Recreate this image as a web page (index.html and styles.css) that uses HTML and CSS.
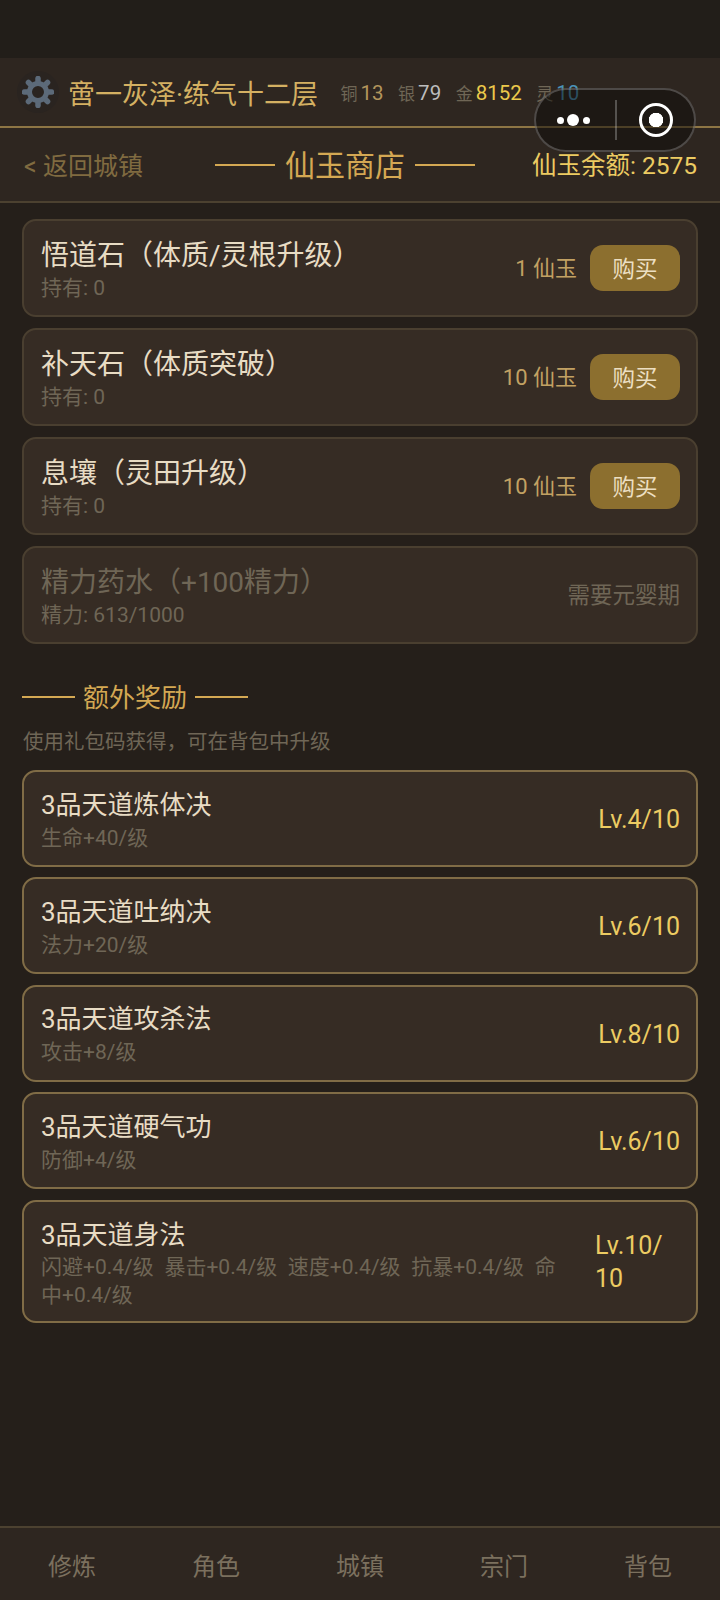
FILE: index.html
```html
<!DOCTYPE html>
<html lang="zh-CN">
<head>
<meta charset="utf-8">
<title>仙玉商店</title>
<link rel="stylesheet" href="styles.css">
</head>
<body>
<div class="page">
  <div class="statusbar"></div>
  <header class="topbar">
    <div class="avatar">
      <svg viewBox="0 0 32 32" width="32" height="32">
        <g class="gear-teeth">
          <path d="M16 2.500V29.500"/>
          <path d="M2.500 16H29.500"/>
          <path d="M6.450 6.450L25.550 25.550"/>
          <path d="M25.550 6.450L6.450 25.550"/>
        </g>
        <circle class="gear-body" cx="16" cy="16" r="8.500"/>
      </svg>
    </div>
    <div class="player">啻一灰泽·练气十二层</div>
    <div class="res"><span class="res-label">铜</span><span class="res-val copper">13</span></div>
    <div class="res"><span class="res-label">银</span><span class="res-val silver">79</span></div>
    <div class="res"><span class="res-label">金</span><span class="res-val gold">8152</span></div>
    <div class="res"><span class="res-label">灵</span><span class="res-val spirit">10</span></div>
  </header>
  <nav class="subbar">
    <div class="back">&lt; 返回城镇</div>
    <div class="shop-title"><span class="dash dash-lg"></span><span class="raised">仙玉商店</span><span class="dash dash-lg"></span></div>
    <div class="balance">仙玉余额: 2575</div>
  </nav>
  <main class="content">
    <section class="list shop">
      <div class="card">
        <div class="info"><div class="name">悟道石（体质/灵根升级）</div><div class="meta">持有: 0</div></div>
        <div class="price">1 仙玉</div><div class="buy">购买</div>
      </div>
      <div class="card">
        <div class="info"><div class="name">补天石（体质突破）</div><div class="meta">持有: 0</div></div>
        <div class="price">10 仙玉</div><div class="buy">购买</div>
      </div>
      <div class="card">
        <div class="info"><div class="name">息壤（灵田升级）</div><div class="meta">持有: 0</div></div>
        <div class="price">10 仙玉</div><div class="buy">购买</div>
      </div>
      <div class="card disabled">
        <div class="info"><div class="name">精力药水（+100精力）</div><div class="meta">精力: 613/1000</div></div>
        <div class="locked">需要元婴期</div>
      </div>
    </section>
    <div class="section-title"><span class="dash"></span><span class="raised">额外奖励</span><span class="dash"></span></div>
    <div class="section-sub">使用礼包码获得，可在背包中升级</div>
    <section class="list bonus">
      <div class="card gold-edge">
        <div class="info"><div class="name">3品天道炼体决</div><div class="meta">生命+40/级</div></div>
        <div class="lv">Lv.4/10</div>
      </div>
      <div class="card gold-edge">
        <div class="info"><div class="name">3品天道吐纳决</div><div class="meta">法力+20/级</div></div>
        <div class="lv">Lv.6/10</div>
      </div>
      <div class="card gold-edge">
        <div class="info"><div class="name">3品天道攻杀法</div><div class="meta">攻击+8/级</div></div>
        <div class="lv">Lv.8/10</div>
      </div>
      <div class="card gold-edge">
        <div class="info"><div class="name">3品天道硬气功</div><div class="meta">防御+4/级</div></div>
        <div class="lv">Lv.6/10</div>
      </div>
      <div class="card gold-edge tall">
        <div class="info wrap"><div class="name">3品天道身法</div><div class="meta stats">闪避+0.4/级&ensp;暴击+0.4/级&ensp;速度+0.4/级&ensp;抗暴+0.4/级&ensp;命中+0.4/级</div></div>
        <div class="lv lv-wrap">Lv.10/<br>10</div>
      </div>
    </section>
  </main>
  <footer class="tabbar">
    <div class="tab">修炼</div>
    <div class="tab">角色</div>
    <div class="tab">城镇</div>
    <div class="tab">宗门</div>
    <div class="tab">背包</div>
  </footer>
  <div class="capsule">
    <div class="cap-side cap-left dots"><i></i><i class="big"></i><i></i></div>
    <div class="cap-sep"></div>
    <div class="cap-side"><div class="target"></div></div>
  </div>
</div>
</body>
</html>
```
FILE: styles.css
```css
* { box-sizing: border-box; }
html, body { margin: 0; padding: 0; }
body {
  background: #231e19;
  font-family: "Roboto", "Noto Sans CJK SC", sans-serif;
  font-weight: 400;
}
.page {
  position: relative;
  width: 720px;
  height: 1600px;
  overflow: hidden;
  display: flex;
  flex-direction: column;
  background: #251f1a;
}
.statusbar { height: 58px; background: #221e19; flex: none; }

.topbar {
  flex: none;
  height: 70px;
  display: flex;
  align-items: center;
  padding: 0 0 0 17px;
  background: #2e2620;
  border-bottom: 2px solid #8d7544;
}
.avatar {
  width: 42px;
  height: 42px;
  border-radius: 50%;
  background: #2a2420;
  display: flex;
  align-items: center;
  justify-content: center;
  margin-right: 9px;
  flex: none;
}
.gear-teeth path { stroke: #5c6a79; stroke-width: 5.500; stroke-linecap: round; fill: none; }
.gear-body { fill: #2a2420; stroke: #5c6a79; stroke-width: 5; }
.player { font-size: 27px; color: #d4b062; margin-right: 22.500px; white-space: nowrap; }
.res { display: flex; align-items: baseline; margin-right: 14.500px; white-space: nowrap; }
.res-label { font-size: 17px; color: #6f6656; margin-right: 3px; }
.res-val { font-size: 20.500px; }
.copper { color: #b3955c; }
.silver { color: #bdbdbd; }
.gold { color: #ecc94b; }
.spirit { color: #4b93b8; }

.subbar {
  flex: none;
  height: 75px;
  display: grid;
  grid-template-columns: 191px auto 1fr;
  align-items: center;
  padding: 0 23px 0 24px;
  background: #2e2620;
  border-bottom: 2px solid #4c4130;
}
.back { font-size: 25px; color: #806b40; white-space: nowrap; padding-bottom: 2px; }
.shop-title { display: flex; align-items: center; gap: 10px; font-size: 30px; color: #d4a853; }
.raised { padding-bottom: 4px; }
.balance { font-size: 24.500px; color: #eccb62; text-align: right; white-space: nowrap; padding-bottom: 3px; }
.dash { display: block; width: 53px; height: 2px; background: #d4a853; }
.dash-lg { width: 60px; }

.content { flex: 1; min-height: 0; padding: 16px 22px 0; }
.list { display: flex; flex-direction: column; }
.shop { gap: 11px; }
.bonus { gap: 10.400px; }

.card {
  display: flex;
  align-items: center;
  height: 98px;
  padding: 0 16px 0 17px;
  background: #362c24;
  border: 2px solid #4a3f30;
  border-radius: 14px;
}
.gold-edge { height: 97px; border-color: #806c46; }
.tall { height: 123px; }
.info { flex: 1; min-width: 0; padding-top: 4px; }
.wrap { padding-right: 32px; }
.name { font-size: 28px; line-height: 38px; color: #e8dcc4; white-space: nowrap; }
.bonus .name { font-size: 26px; line-height: 35px; }
.meta { font-size: 21px; line-height: 29px; color: #6f6656; margin-top: -1px; }
.bonus .info { padding-top: 3px; }
.bonus .meta { margin-top: 1px; }
.bonus .wrap { padding-top: 5px; }
.bonus .stats { line-height: 27.500px; }
.price { font-size: 22px; color: #c2a163; margin-right: 13px; padding-bottom: 4px; white-space: nowrap; }
.buy {
  width: 90px;
  height: 46px;
  display: flex;
  align-items: center;
  justify-content: center;
  padding-bottom: 3px;
  border-radius: 13px;
  background: #8c6f2f;
  color: #ecdfc2;
  font-size: 22.500px;
}
.disabled .name { color: #6f6656; }
.disabled .meta { color: #6f6656; }
.locked { font-size: 22.500px; color: #6f6656; white-space: nowrap; padding-bottom: 4px; }
.lv { font-size: 25px; color: #eccb62; white-space: nowrap; padding-top: 2px; }
.lv-wrap { line-height: 33px; width: 85px; flex: none; }

.section-title {
  display: flex;
  align-items: center;
  gap: 8px;
  height: 40px;
  margin-top: 33px;
  font-size: 26px;
  color: #d4a853;
}
.section-sub { font-size: 20.500px; line-height: 30px; color: #6f6656; margin: 10px 0 13px 1px; }

.tabbar {
  flex: none;
  height: 74px;
  display: grid;
  grid-template-columns: repeat(5, 1fr);
  align-items: center;
  background: #2e2620;
  border-top: 2px solid #4c4130;
}
.tab { text-align: center; font-size: 24px; color: #7b705e; }

.capsule {
  position: absolute;
  left: 534px;
  top: 88px;
  width: 162px;
  height: 64px;
  border-radius: 32px;
  background: rgba(12, 10, 8, .5);
  border: 2px solid rgba(255, 255, 255, .22);
  display: flex;
  align-items: center;
}
.cap-side { flex: 1; display: flex; align-items: center; justify-content: center; }
.cap-left { flex: none; width: 79px; }
.dots { gap: 3.500px; padding-right: 5px; }
.dots i { display: block; width: 7px; height: 7px; border-radius: 50%; background: #fff; }
.dots i.big { width: 12px; height: 12px; }
.cap-sep { width: 2px; height: 40px; background: rgba(255, 255, 255, .25); }
.target {
  width: 34px;
  height: 34px;
  border-radius: 50%;
  border: 3.500px solid #fff;
  background: radial-gradient(circle, #fff 0, #fff 7px, transparent 7.500px);
}
```
